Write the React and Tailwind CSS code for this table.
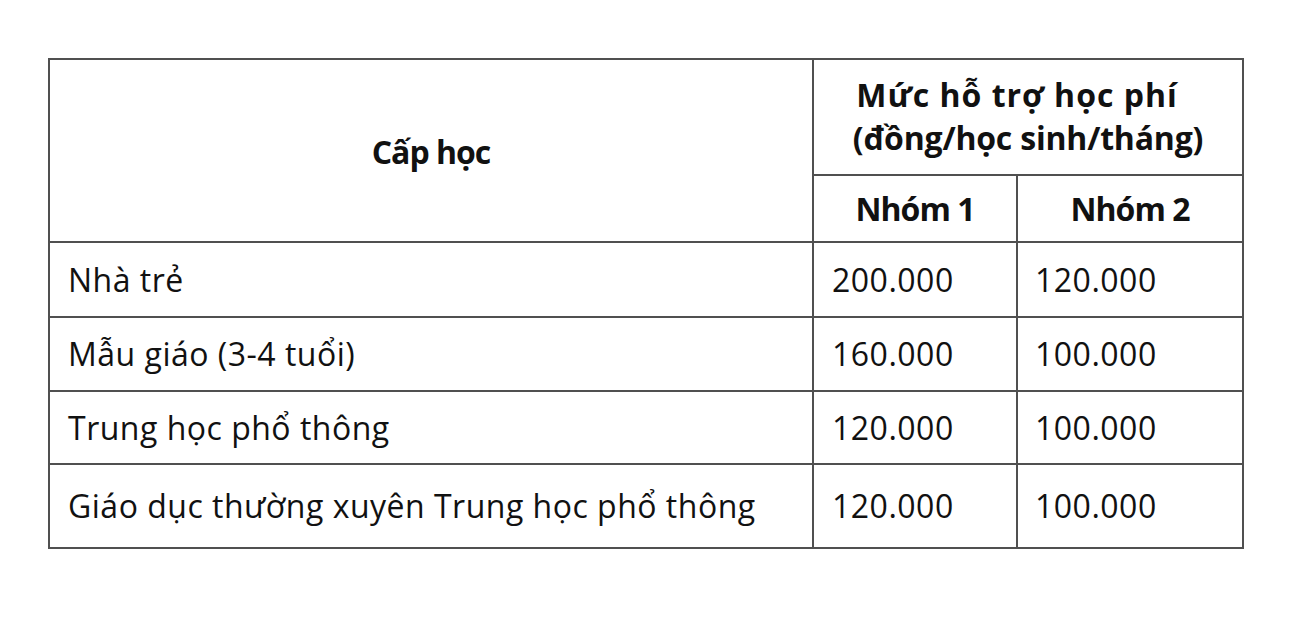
export default function App() {
  const rows = [
    ["Nhà trẻ", "200.000", "120.000", "h-[75px]"],
    ["Mẫu giáo (3-4 tuổi)", "160.000", "100.000", "h-[74px]"],
    ["Trung học phổ thông", "120.000", "100.000", "h-[73px]"],
    ["Giáo dục thường xuyên Trung học phổ thông", "120.000", "100.000", "h-[84px]"],
  ];
  const cell = "border-2 border-[#505050]";
  return (
    <div className="w-[1290px] h-[631px] bg-white pl-[48px] pt-[58px] text-[#111111]" style={{ fontFamily: "'Open Sans', 'Noto Sans', sans-serif" }}>
      <table className="border-collapse table-fixed w-[1194px] text-[32px] tracking-[0.5px]">
        <colgroup>
          <col className="w-[764px]" />
          <col className="w-[204px]" />
          <col className="w-[226px]" />
        </colgroup>
        <tbody>
          <tr className="h-[116px]">
            <td rowSpan={2} className={`${cell} text-center font-bold align-middle pt-[2px] tracking-[-1px]`}>Cấp học</td>
            <td colSpan={2} className={`${cell} text-center font-bold leading-[43px] pb-[2px]`}>
              <div className="tracking-[1px] pr-[22px]">Mức hỗ trợ học phí</div>
              <div className="tracking-[-0.2px]">(đồng/học sinh/tháng)</div>
            </td>
          </tr>
          <tr className="h-[67px]">
            <td className={`${cell} text-center font-bold tracking-[-1px]`}>Nhóm 1</td>
            <td className={`${cell} text-center font-bold tracking-[-1px]`}>Nhóm 2</td>
          </tr>
          {rows.map(([a, b, c, h]) => (
            <tr key={a} className={h}>
              <td className={`${cell} pl-[18px]`}>{a}</td>
              <td className={`${cell} pl-[18px]`}>{b}</td>
              <td className={`${cell} pl-[17px]`}>{c}</td>
            </tr>
          ))}
        </tbody>
      </table>
    </div>
  );
}
